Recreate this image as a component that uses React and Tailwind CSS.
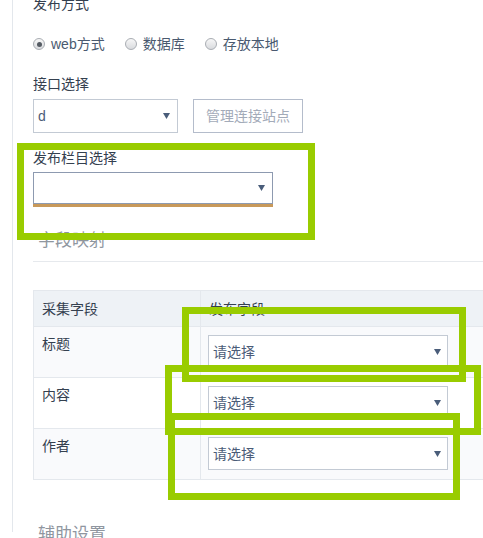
import React from "react";

const Arrow = () => (
  <svg width="7" height="6" viewBox="0 0 7 6" className="shrink-0">
    <polygon points="0,0 7,0 3.5,6" fill="#4a5d7a" />
  </svg>
);

const Radio = ({ checked, label }) => (
  <div className="flex items-center mr-[20px]">
    <span className="w-[12px] h-[12px] rounded-full border border-[#a9adb3] bg-gradient-to-b from-[#f7f7f7] to-[#d9dbde] flex items-center justify-center">
      {checked && <span className="w-[5px] h-[5px] rounded-full bg-[#555b63]" />}
    </span>
    <span className="ml-[6px] text-[#4a5a70]">{label}</span>
  </div>
);

const RowSelect = () => (
  <div className="w-[240px] h-[33px] border border-[#c3cad4] bg-white flex items-center justify-between pl-[4px] pr-[6px] text-[#4b5c78]">
    <span>请选择</span>
    <Arrow />
  </div>
);

const Row = ({ label, bg }) => (
  <div className={`flex h-[51px] border-b border-[#e4e8ed] ${bg}`}>
    <div className="w-[167px] border-r border-[#e4e8ed] pl-[8px] pt-[7px] text-[#34404f]">{label}</div>
    <div className="flex-1 pl-[7px] pt-[8px]">
      <RowSelect />
    </div>
  </div>
);

const Green = ({ cls }) => (
  <div className={`absolute border-[7px] border-[#99cc00] ${cls}`} />
);

export default function App() {
  return (
    <div className="relative w-[483px] h-[538px] overflow-hidden bg-white font-['Liberation_Sans','Noto_Sans_CJK_SC',sans-serif] text-[14px] leading-[20px]">
      <div className="ml-[12px] border-l border-[#e3e7ec] pl-[20px] w-[620px] h-full">
        <div className="mt-[-6px] text-[#34404f]">发布方式</div>
        <div className="mt-[20px] flex items-center h-[20px]">
          <Radio checked label="web方式" />
          <Radio label="数据库" />
          <Radio label="存放本地" />
        </div>
        <div className="mt-[20px] text-[#34404f]">接口选择</div>
        <div className="mt-[5px] flex items-center">
          <div className="w-[145px] h-[34px] border border-[#c3cad4] flex items-center justify-between pl-[4px] pr-[7px] text-[#4b5c78]">
            <span>d</span>
            <Arrow />
          </div>
          <div className="ml-[15px] w-[110px] h-[34px] border border-[#b4bccb] flex items-center justify-center text-[#a3abb9]">
            管理连接站点
          </div>
        </div>
        <div className="mt-[15px] text-[#34404f]">发布栏目选择</div>
        <div className="mt-[4px] w-[240px] h-[32px] border border-[#8d9ab0] flex items-center justify-end pr-[7px] shadow-[0_3px_0_#c8995a]">
          <Arrow />
        </div>
        <div className="mt-[25px] pl-[5px] text-[17px] leading-[24px] text-[#8f969f]">字段映射</div>
        <div className="mt-[8px] border-t border-[#e6e9ed]" />
        <div className="mt-[28px] border border-[#e4e8ed] border-b-0">
          <div className="flex h-[36px] border-b border-[#e4e8ed] bg-[#eef2f6] items-center">
            <div className="w-[167px] h-full border-r border-[#e4e8ed] pl-[8px] flex items-center text-[#34404f]">采集字段</div>
            <div className="flex-1 pl-[8px] text-[#34404f]">发布字段</div>
          </div>
          <Row label="标题" bg="bg-[#f9fafc]" />
          <Row label="内容" bg="bg-white" />
          <Row label="作者" bg="bg-[#f9fafc]" />
        </div>
        <div className="mt-[43px] pl-[5px] text-[17px] leading-[24px] text-[#8f969f]">辅助设置</div>
      </div>
      <Green cls="left-[17px] top-[143px] w-[298px] h-[97px]" />
      <Green cls="left-[182px] top-[307px] w-[284px] h-[75px]" />
      <Green cls="left-[165px] top-[365px] w-[316px] h-[70px]" />
      <Green cls="left-[168px] top-[413px] w-[292px] h-[87px]" />
    </div>
  );
}
